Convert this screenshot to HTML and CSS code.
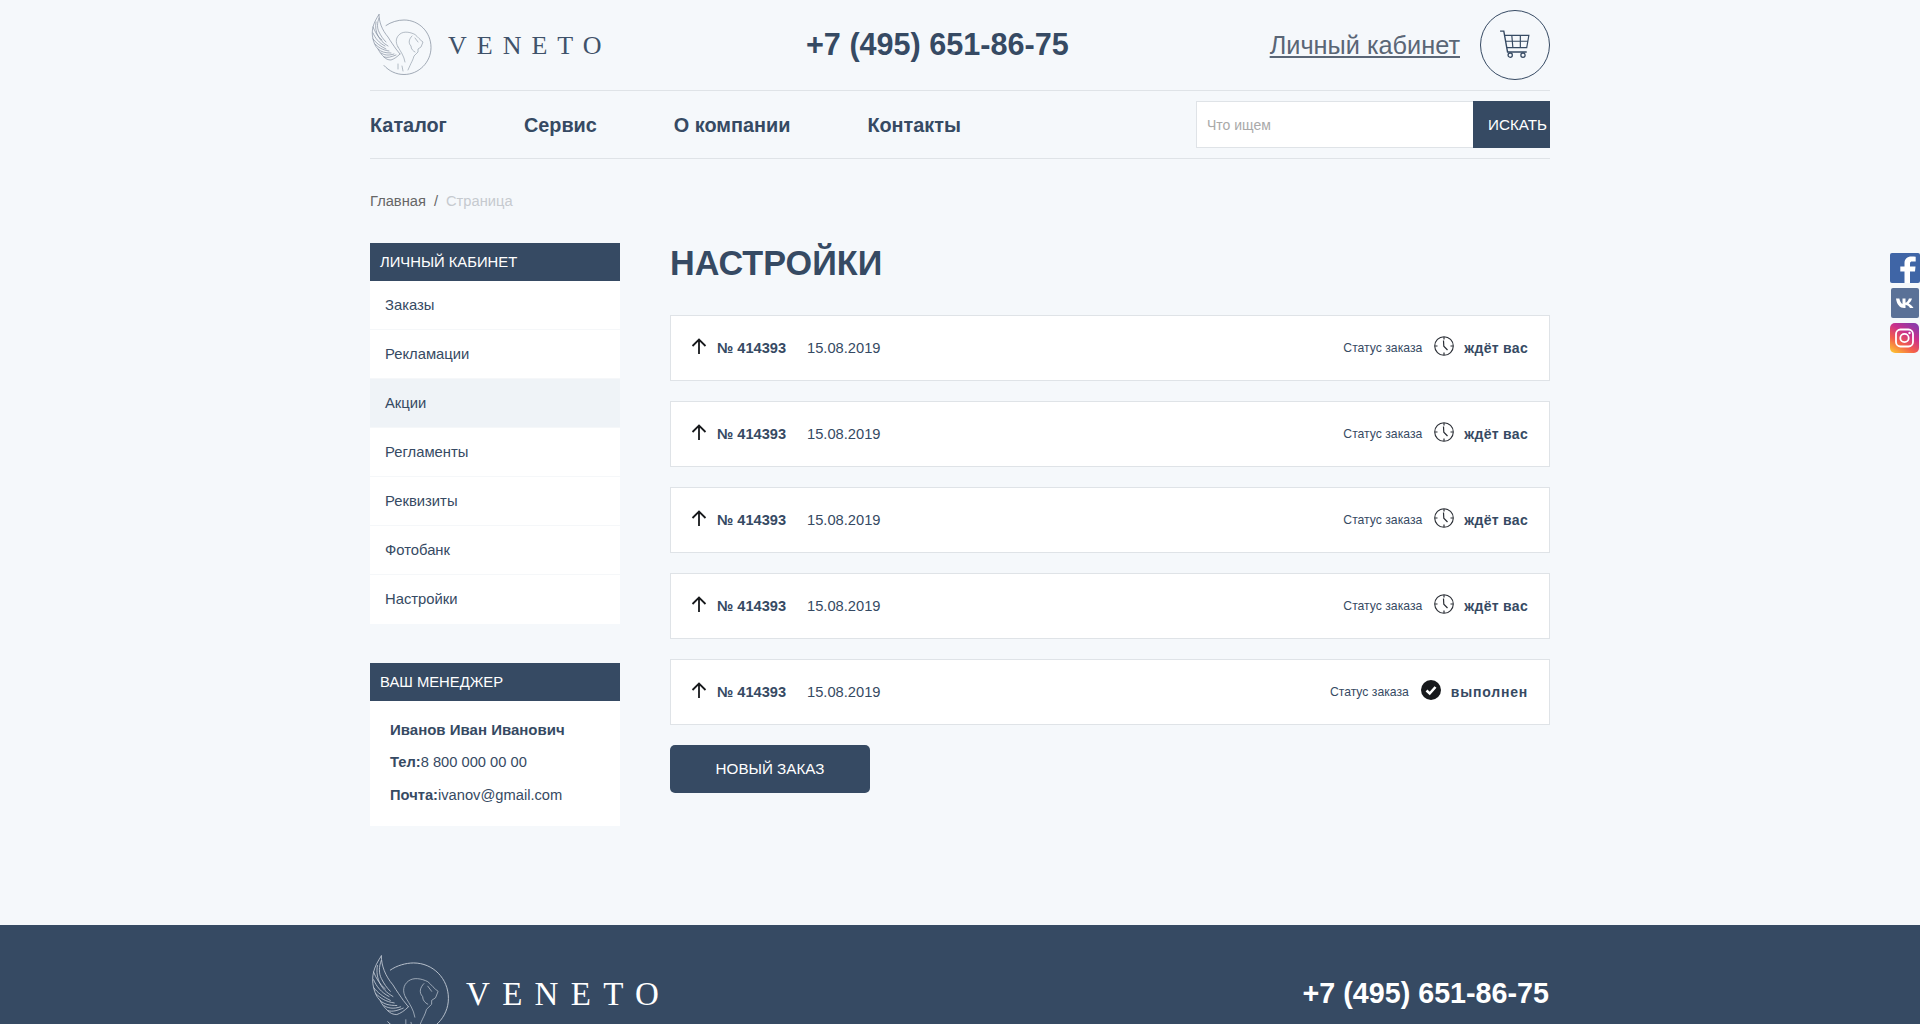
FILE: index.html
```html
<!DOCTYPE html>
<html lang="ru">
<head>
<meta charset="UTF-8">
<meta name="viewport" content="width=device-width, initial-scale=1.0">
<title>Настройки - Veneto</title>
<link rel="stylesheet" href="styles.css">
</head>
<body>

<svg class="sprite" aria-hidden="true">
  <symbol id="lion" viewBox="0 0 62 64">
    <g fill="none" stroke="currentColor" stroke-linecap="round">
      <path stroke-width=".7" d="M15 11.500C20 8 27 6 33 6C48 6 60 18 60 33.500C60 48 48 60.500 33 60.500C25 60.500 18 57 13 51.500"/>
      <g stroke-width=".65">
        <path d="M8 .5C8 8 11 16 17 23C20 28 23 32 25 35L29 40"/>
        <path d="M8 .5C5 5 3 9 2 13C1 17 1 21 2 25C3 29 4 32 7 35C9 39 11 41 13 43C15 45 17 46 20 46C23 45 26 43 29 40"/>
        <path d="M8 4C6 9 6 14 8 18C10 22 12 25 15 28M5 8C4 13 5 18 7 22C9 26 12 29 17 32"/>
        <path d="M2 13C4 18 7 23 11 26M2 19C4 24 8 29 14 32M2 25C5 29 9 32 15 35M4 30C7 33 11 36 18 37"/>
        <path d="M7 35C10 38 14 39 20 39M10 39C13 41 17 42 23 40M13 43C17 44 20 43 25 41"/>
      </g>
      <g stroke-width=".55">
        <path d="M27 33C24 28 25 23 29 20C33 17 39 18 44 20.500C47 23 49 26 52 28L50 33L47 35L47 38L43 42C42 46 40 49 39 51.500L37 56"/>
        <path d="M41 22C38 25 37 29 40 32C40 35 42 37 44 38M44 24L47 28M27 33C30 38 33 42 34 48M27 50V55M31 52L32 57"/>
      </g>
    </g>
  </symbol>
  <symbol id="clock" viewBox="0 0 20 20">
    <circle cx="10" cy="10" r="9.300" fill="none" stroke="currentColor" stroke-width="1.100"/>
    <path fill="none" stroke="currentColor" stroke-width="1.200" d="M10 1v2.500M10 16.500V19M1 10h2.500M16.500 10H19M9.500 4.500L9.800 10.200L13.500 14"/>
  </symbol>
  <symbol id="check" viewBox="0 0 20 20">
    <circle cx="10" cy="10" r="10" fill="#17191c"/>
    <path fill="none" stroke="#fff" stroke-width="2.600" d="M5.500 10.500L8.700 13.500L14.500 7"/>
  </symbol>
  <symbol id="up" viewBox="0 0 16 16">
    <path fill="none" stroke="#17191c" stroke-width="1.800" d="M8 16V1.500M1.500 8L8 1.500L14.500 8"/>
  </symbol>
</svg>

<div class="wrap">
  <header class="top">
    <a class="logo" href="#">
      <svg class="logo-mark"><use href="#lion"/></svg>
      <span class="logo-text">VENETO</span>
    </a>
    <div class="phone">+7 (495) 651-86-75</div>
    <div class="top-right">
      <a class="cabinet" href="#">Личный кабинет</a>
      <a class="cart" href="#">
        <svg width="32" height="32" viewBox="0 0 30 30" fill="none" stroke="#364a63">
          <path stroke-width="1.300" d="M1 2H4.500L8 21.500H26"/>
          <path stroke-width="1.100" d="M5 6H28L26 17.500H7.200M12 6L13 17.500M20 6V17.500M5.800 11.500H27"/>
          <circle cx="10.500" cy="24.500" r="2" stroke-width="1.200"/>
          <circle cx="22.500" cy="24.500" r="2" stroke-width="1.200"/>
        </svg>
      </a>
    </div>
  </header>

  <nav class="nav">
    <div class="nav-links">
      <a href="#">Каталог</a>
      <a href="#">Сервис</a>
      <a href="#">О компании</a>
      <a href="#">Контакты</a>
    </div>
    <form class="search">
      <input type="text" placeholder="Что ищем">
      <button type="button">ИСКАТЬ</button>
    </form>
  </nav>

  <div class="crumbs">
    <a href="#">Главная</a><span class="sep">/</span><span class="current">Страница</span>
  </div>

  <div class="layout">
    <aside class="side">
      <div class="side-title">ЛИЧНЫЙ КАБИНЕТ</div>
      <ul class="side-menu">
        <li><a href="#">Заказы</a></li>
        <li><a href="#">Рекламации</a></li>
        <li class="active"><a href="#">Акции</a></li>
        <li><a href="#">Регламенты</a></li>
        <li><a href="#">Реквизиты</a></li>
        <li><a href="#">Фотобанк</a></li>
        <li><a href="#">Настройки</a></li>
      </ul>

      <div class="side-title manager-title">ВАШ МЕНЕДЖЕР</div>
      <div class="manager">
        <p class="manager-name">Иванов Иван Иванович</p>
        <p><b>Тел:</b>8 800 000 00 00</p>
        <p><b>Почта:</b>ivanov@gmail.com</p>
      </div>
    </aside>

    <main class="content">
      <h1>НАСТРОЙКИ</h1>

      <div class="order">
        <svg class="up"><use href="#up"/></svg>
        <b class="order-num">№ 414393</b>
        <span class="order-date">15.08.2019</span>
        <div class="status">
          <span class="status-label">Статус заказа</span>
          <svg class="status-icon"><use href="#clock"/></svg>
          <b class="status-text">ждёт вас</b>
        </div>
      </div>
      <div class="order">
        <svg class="up"><use href="#up"/></svg>
        <b class="order-num">№ 414393</b>
        <span class="order-date">15.08.2019</span>
        <div class="status">
          <span class="status-label">Статус заказа</span>
          <svg class="status-icon"><use href="#clock"/></svg>
          <b class="status-text">ждёт вас</b>
        </div>
      </div>
      <div class="order">
        <svg class="up"><use href="#up"/></svg>
        <b class="order-num">№ 414393</b>
        <span class="order-date">15.08.2019</span>
        <div class="status">
          <span class="status-label">Статус заказа</span>
          <svg class="status-icon"><use href="#clock"/></svg>
          <b class="status-text">ждёт вас</b>
        </div>
      </div>
      <div class="order">
        <svg class="up"><use href="#up"/></svg>
        <b class="order-num">№ 414393</b>
        <span class="order-date">15.08.2019</span>
        <div class="status">
          <span class="status-label">Статус заказа</span>
          <svg class="status-icon"><use href="#clock"/></svg>
          <b class="status-text">ждёт вас</b>
        </div>
      </div>
      <div class="order">
        <svg class="up"><use href="#up"/></svg>
        <b class="order-num">№ 414393</b>
        <span class="order-date">15.08.2019</span>
        <div class="status">
          <span class="status-label">Статус заказа</span>
          <svg class="status-icon"><use href="#check"/></svg>
          <b class="status-text done">выполнен</b>
        </div>
      </div>

      <a class="new-order" href="#">НОВЫЙ ЗАКАЗ</a>
    </main>
  </div>
</div>

<footer class="footer">
  <div class="footer-in">
    <a class="logo logo-big" href="#">
      <svg class="logo-mark"><use href="#lion"/></svg>
      <span class="logo-text">VENETO</span>
    </a>
    <div class="phone">+7 (495) 651-86-75</div>
  </div>
</footer>

<!-- social buttons stuck to the window edge -->
<div class="social">
  <a class="soc fb" href="#">
    <svg viewBox="0 0 30 30" width="30" height="30"><rect width="30" height="30" rx="2" fill="#3f65a6"/><path fill="#fff" d="M20 30V18.500H25L25.500 13.500H20V10.500C20 9 20.800 8.500 22 8.500H25.700V3.700C24.500 3.500 23 3.400 21.500 3.400C17.200 3.400 14.500 5.800 14.500 10V13.500H10.300V18.500H14.500V30Z"/></svg>
  </a>
  <a class="soc vk" href="#">
    <svg viewBox="0 0 28 30" width="28" height="30"><rect width="28" height="30" rx="2" fill="#5a7197"/><path fill="#fff" d="M5 10.500H8.400C8.700 12.800 10 15.300 11.500 16V10.500H14.500V14.800C15.900 14.400 17.300 12.500 17.900 10.500H21C20.500 12.500 19 14.500 17.700 15.500C19.200 16.300 21.300 18 22.500 20H19C18.100 18.300 16.200 17 14.500 16.700V20H13.200C9 20 5.800 16.800 5 10.500Z"/></svg>
  </a>
  <a class="soc ig" href="#">
    <svg viewBox="0 0 29 30" width="29" height="30">
      <defs>
        <linearGradient id="ig-grad" x1=".1" y1="1" x2=".7" y2="0">
          <stop offset="0" stop-color="#fdc531"/>
          <stop offset=".35" stop-color="#f4604a"/>
          <stop offset=".7" stop-color="#c92f8c"/>
          <stop offset="1" stop-color="#8e3aa8"/>
        </linearGradient>
      </defs>
      <rect width="29" height="30" rx="5" fill="url(#ig-grad)"/>
      <g fill="none" stroke="#fff" stroke-width="1.800">
        <rect x="6" y="6.500" width="17" height="17" rx="4.500"/>
        <circle cx="14.500" cy="15" r="4.200"/>
      </g>
      <circle cx="19.500" cy="10" r="1.200" fill="#fff"/>
    </svg>
  </a>
</div>

</body>
</html>
```

FILE: styles.css
```css
* {
box-sizing: border-box;
}
html, body {
height: 100%;
}
body {
margin: 0;
font-family: "Liberation Sans", Arial, sans-serif;
background-color: #f5f8fb;
color: #364a63;
font-size: 14px;
overflow-x: hidden;
}
a {
color: inherit;
text-decoration: none;
}
p {
margin: 0;
}
.sprite {
display: none;
}
.wrap {
width: 1180px;
margin: 0 auto;
height: 925px;
}

/* header */
.top {
display: grid;
grid-template-columns: 436px 1fr auto;
align-items: center;
height: 91px;
border-bottom: 1px solid #dfe3e7;
}
.logo {
display: flex;
align-items: center;
color: #7b8797;
}
.logo-mark {
width: 62px;
height: 64px;
margin-left: 1px;
margin-top: 1px;
}
.logo-text {
font-family: "Liberation Serif", serif;
font-size: 26px;
letter-spacing: 10px;
color: #3f526a;
margin-left: 15px;
margin-top: 2px;
}
.phone {
font-size: 30.600px;
font-weight: bold;
color: #364a63;
white-space: nowrap;
margin-top: -2px;
}
.top-right {
display: flex;
align-items: center;
gap: 20px;
}
.cabinet {
font-size: 25.300px;
color: #5a6676;
text-decoration: underline;
}
.cart {
width: 70px;
height: 70px;
border: 1px solid #364a63;
border-radius: 50%;
display: flex;
align-items: center;
justify-content: center;
}

/* nav */
.nav {
display: flex;
align-items: center;
justify-content: space-between;
height: 68px;
border-bottom: 1px solid #dfe3e7;
}
.nav-links {
display: flex;
gap: 77px;
font-size: 19.850px;
font-weight: bold;
padding-top: 1px;
}
.search {
display: flex;
height: 47px;
}
.search input {
width: 277px;
height: 47px;
border: 1px solid #dfe3e7;
border-right: none;
background-color: #fff;
padding: 0 10px;
font-family: inherit;
font-size: 14px;
outline: none;
}
.search input::placeholder {
color: #a9a9a9;
}
.search button {
width: 77px;
height: 47px;
border: none;
padding: 0 0 0 15px;
background-color: #364a63;
color: #fff;
font-family: inherit;
font-size: 15.200px;
text-align: left;
white-space: nowrap;
overflow: hidden;
}

/* breadcrumbs */
.crumbs {
height: 84px;
padding-top: 34px;
font-size: 14.700px;
line-height: 17px;
color: #666;
}
.crumbs .sep {
margin: 0 8px;
}
.crumbs .current {
color: #c6cacf;
}

.layout {
display: flex;
gap: 50px;
}

/* sidebar */
.side {
width: 250px;
}
.side-title {
height: 38px;
line-height: 38px;
padding-left: 10px;
background-color: #364a63;
color: #fff;
font-size: 14.800px;
white-space: nowrap;
}
.side-menu {
list-style: none;
margin: 0;
padding: 0;
background-color: #fff;
}
.side-menu li {
height: 49px;
border-bottom: 1px solid #f5f7f9;
}
.side-menu li:last-child {
border-bottom: none;
}
.side-menu li.active {
background-color: #eff3f7;
}
.side-menu a {
display: block;
padding-left: 15px;
line-height: 48px;
font-size: 14.800px;
}
.manager-title {
margin-top: 39px;
}
.manager {
background-color: #fff;
height: 125px;
padding: 12px 20px 0;
font-size: 14.700px;
}
.manager p {
height: 33px;
line-height: 33px;
white-space: nowrap;
}
.manager-name {
font-weight: bold;
font-size: 15px;
}

/* orders */
.content {
flex: 1;
}
.content h1 {
margin: 0 0 32px;
height: 40px;
line-height: 40px;
font-size: 34.200px;
font-weight: bold;
color: #364a63;
}
.order {
display: flex;
align-items: center;
height: 66px;
margin-bottom: 20px;
padding: 0 21px 0 20px;
background-color: #fff;
border: 1px solid #dfe3e7;
}
.up {
width: 16px;
height: 16px;
margin-right: 10px;
margin-top: -5px;
}
.order-num {
width: 90px;
font-size: 14.600px;
}
.order-date {
font-size: 14.700px;
}
.status {
margin-left: auto;
display: flex;
align-items: center;
}
.status-label {
font-size: 12.200px;
}
.status-icon {
width: 20px;
height: 20px;
margin: -4px 10px 0 12px;
color: #2a2e35;
}
.status-text {
font-size: 14px;
letter-spacing: .3px;
}
.status-text.done {
letter-spacing: .8px;
}
.new-order {
display: block;
width: 200px;
height: 48px;
line-height: 48px;
text-align: center;
background-color: #364a63;
color: #fff;
font-size: 15.200px;
border-radius: 5px;
}

/* footer */
.footer {
height: 99px;
overflow: hidden;
background-color: #364a63;
}
.footer-in {
width: 1180px;
margin: 0 auto;
display: flex;
justify-content: space-between;
align-items: flex-start;
}
.footer .phone {
color: #fff;
font-size: 28.700px;
margin-top: 52px;
margin-right: 1px;
}
.logo-big {
color: #c4ccd6;
padding-top: 29px;
}
.logo-big .logo-mark {
width: 80px;
height: 83px;
margin-left: 1px;
}
.logo-big .logo-text {
color: #fff;
font-size: 33px;
letter-spacing: 12.300px;
margin-left: 15px;
margin-top: -3px;
}

/* social */
.social {
position: fixed;
top: 253px;
right: 0;
width: 30px;
display: flex;
flex-direction: column;
align-items: flex-end;
gap: 5px;
}
.soc {
display: block;
height: 30px;
}
.soc svg {
display: block;
}
.vk {
margin-right: 1px;
}
.ig {
margin-right: 1px;
}
```
